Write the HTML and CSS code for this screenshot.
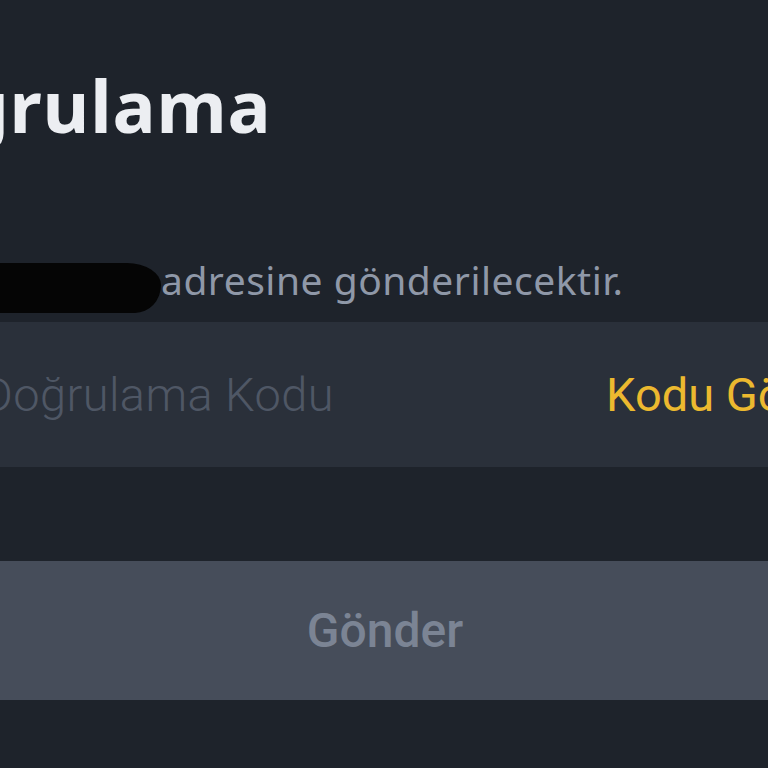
FILE: index.html
```html
<!DOCTYPE html>
<html lang="tr">
<head>
<meta charset="utf-8">
<title>Doğrulama</title>
<link rel="stylesheet" href="styles.css">
</head>
<body>
<main class="screen">
  <h1 class="title">Doğrulama</h1>
  <p class="desc"><span class="redact" aria-hidden="true"></span><span class="desc-text">adresine gönderilecektir.</span></p>
  <div class="field">
    <span class="placeholder">Doğrulama Kodu</span>
    <span class="send">Kodu Gönder</span>
  </div>
  <button class="submit" type="button">Gönder</button>
</main>
</body>
</html>
```

FILE: styles.css
```css
html, body {
  margin: 0;
  padding: 0;
  background: #1e232b;
  overflow: hidden;
  width: 768px;
  height: 768px;
}

.screen {
  margin-left: -60px;
  width: 960px;
  padding-top: 70px;
  display: flex;
  flex-direction: column;
  align-items: flex-start;
}

.title {
  margin: 0 0 0 -76px;
  font-family: "Noto Sans", sans-serif;
  font-weight: 700;
  font-size: 72px;
  letter-spacing: 0.8px;
  line-height: 70px;
  color: #eceef2;
  white-space: nowrap;
}

.desc {
  margin: 116px 0 0 0;
  height: 47px;
  display: flex;
  align-items: flex-start;
  font-family: "Noto Sans", sans-serif;
  font-size: 39px;
  letter-spacing: 0.5px;
  line-height: 47px;
  color: #8f98a8;
  white-space: nowrap;
}

.redact {
  display: block;
  width: 221px;
  height: 50px;
  margin-top: 7px;
  background: #050505;
  border-radius: 0 34px 26px 0 / 0 22px 28px 0;
  flex: none;
}

.field {
  margin-top: 19px;
  width: 960px;
  height: 145px;
  box-sizing: border-box;
  padding: 0 22px 0 42px;
  background: #2a303a;
  display: flex;
  align-items: center;
  font-family: Roboto, sans-serif;
  font-size: 47px;
  white-space: nowrap;
}

.placeholder {
  font-weight: 300;
  letter-spacing: 0.4px;
  color: #4f5765;
}

.send {
  margin-left: auto;
  font-weight: 400;
  color: #ecb92f;
}

.submit {
  margin-top: 94px;
  width: 890px;
  height: 139px;
  border: 0;
  border-radius: 0;
  padding: 0;
  background: #464d5a;
  font-family: Roboto, sans-serif;
  font-weight: 500;
  font-size: 48px;
  color: #7b8494;
}
```
